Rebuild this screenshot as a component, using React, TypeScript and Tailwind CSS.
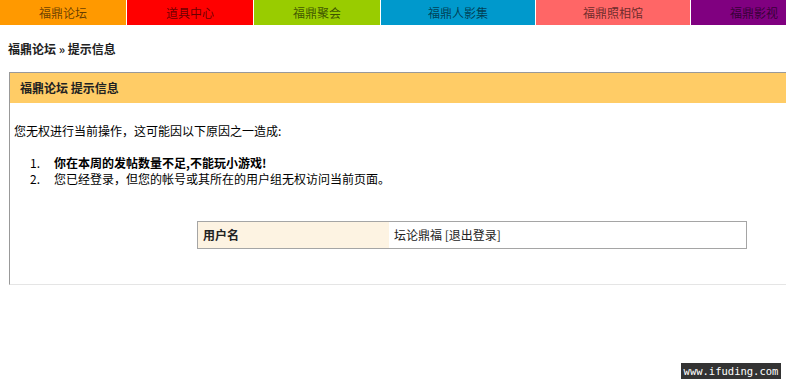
import React from 'react';

const navItems = [
  { label: '福鼎论坛', className: 'w-[126px] bg-[#ff9900]' },
  { label: '道具中心', className: 'w-[126px] bg-[#ff0000]' },
  { label: '福鼎聚会', className: 'w-[126px] bg-[#99cc00]' },
  { label: '福鼎人影集', className: 'w-[154px] bg-[#0099cc]' },
  { label: '福鼎照相馆', className: 'w-[154px] bg-[#ff6666]' },
  { label: '福鼎影视', className: 'w-[126px] bg-[#800080]' },
];

const App: React.FC = () => {
  return (
    <div
      className="relative w-[786px] h-[384px] overflow-hidden bg-white text-[12px] leading-[16px] text-[#000]"
      style={{ fontFamily: '"Noto Sans CJK SC", "Liberation Sans", sans-serif' }}
    >
      <div className="flex h-[25px] gap-px">
        {navItems.map((item) => (
          <div
            key={item.label}
            className={`${item.className} shrink-0 flex items-center justify-center text-black/60`}
          >
            {item.label}
          </div>
        ))}
      </div>

      <div className="mt-[16px] px-[8px] font-bold text-[#222]">福鼎论坛 » 提示信息</div>

      <div className="mt-[15px] ml-[9px] w-[800px] border-t border-l border-[#999] border-b border-b-[#e5e5e5]">
        <div className="h-[30px] bg-[#ffcc66] flex items-center px-[10px] font-bold text-[#222]">
          福鼎论坛 提示信息
        </div>
        <div className="pt-[20px] pl-[4px] pb-[35px]">
          <p>您无权进行当前操作，这可能因以下原因之一造成:</p>
          <ol className="mt-[16px]">
            <li className="flex">
              <span className="w-[40px] pl-[16px]">1.</span>
              <span className="font-bold">你在本周的发帖数量不足,不能玩小游戏!</span>
            </li>
            <li className="flex">
              <span className="w-[40px] pl-[16px]">2.</span>
              <span>您已经登录，但您的帐号或其所在的用户组无权访问当前页面。</span>
            </li>
          </ol>
          <div className="mt-[34px] ml-[183px] w-[550px] h-[28px] flex border border-[#a5a5a5]">
            <div className="w-[191px] bg-[#fdf3e2] flex items-center pl-[5px] font-bold text-[#222]">
              用户名
            </div>
            <div className="flex-1 flex items-center pl-[5px] text-[#222]">坛论鼎福 [退出登录]</div>
          </div>
        </div>
      </div>

      <div
        className="absolute left-[681px] top-[363px] w-[100px] h-[16px] bg-[#333] text-white flex items-center justify-center text-[10.5px] leading-[16px] whitespace-nowrap"
        style={{ fontFamily: '"DejaVu Sans Mono", monospace' }}
      >
        www.ifuding.com
      </div>
    </div>
  );
};

export default App;
